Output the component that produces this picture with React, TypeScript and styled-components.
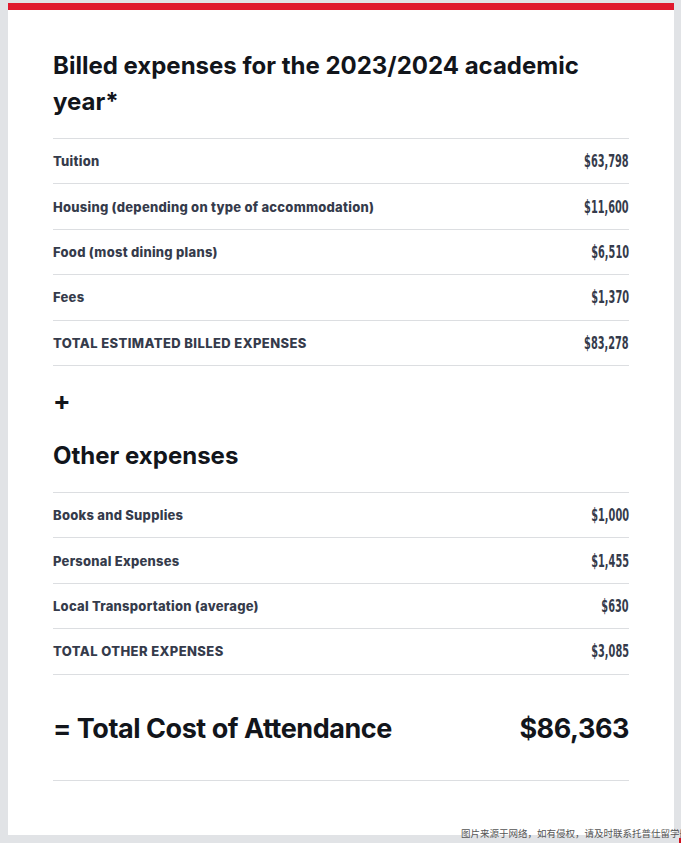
import React from "react";
import styled, { createGlobalStyle } from "styled-components";

const Global = createGlobalStyle`
  html, body { margin: 0; padding: 0; background: #e1e3e6; }
  body { font-family: "Inter", "Noto Sans", sans-serif; }
`;

const Page = styled.div`
  position: relative;
  padding: 3px 7px 8px 8px;
  min-height: 843px;
  box-sizing: border-box;
  overflow: hidden;
`;

const Card = styled.section`
  background: #ffffff;
  border-top: 7px solid #e0192d;
  padding: 38px 45px 54px 45px;
`;

const Heading = styled.h2`
  margin: 0;
  font-family: "Inter", sans-serif;
  font-weight: 700;
  font-size: 24px;
  line-height: 36px;
  color: #12151b;
  letter-spacing: 0;
`;

const Plus = styled.div`
  margin: 17px 0 19px;
  font-family: "Inter", sans-serif;
  font-weight: 700;
  font-size: 26px;
  line-height: 36px;
  color: #12151b;
`;

const Table = styled.div`
  margin-top: 18px;
  border-top: 1px solid #dcdee1;
  display: flex;
  flex-direction: column;
`;

const Row = styled.div`
  display: flex;
  align-items: center;
  justify-content: space-between;
  height: 45.4px;
  box-sizing: border-box;
  border-bottom: 1px solid #dcdee1;
`;

const Label = styled.span<{ $caps?: boolean }>`
  font-family: "Inter", sans-serif;
  font-weight: 800;
  font-size: 13px;
  color: #353b4b;
  letter-spacing: ${(p) => (p.$caps ? "0.4px" : "0.25px")};
`;

const Value = styled.span`
  display: inline-block;
  font-family: "DejaVu Sans Condensed", sans-serif;
  font-weight: 700;
  font-size: 17px;
  color: #353b4b;
  transform: scaleX(0.64);
  transform-origin: right center;
`;

const TotalRow = styled.div`
  display: flex;
  align-items: center;
  justify-content: space-between;
  padding: 34px 0 31px;
  border-bottom: 1px solid #dcdee1;
  font-family: "Inter", sans-serif;
  font-weight: 700;
  font-size: 27px;
  line-height: 40px;
  color: #12151b;
  letter-spacing: -0.45px;
`;

const Watermark = styled.div`
  position: absolute;
  left: 461px;
  top: 826px;
  white-space: nowrap;
  font-family: "Noto Sans CJK SC", sans-serif;
  font-size: 9.5px;
  color: #555555;
`;

const CornerMark = styled.div`
  position: absolute;
  right: 0;
  bottom: 0;
  width: 2px;
  height: 5px;
  background: #d0111f;
`;

type Item = { label: string; value: string; caps?: boolean };

const billed: Item[] = [
  { label: "Tuition", value: "$63,798" },
  { label: "Housing (depending on type of accommodation)", value: "$11,600" },
  { label: "Food (most dining plans)", value: "$6,510" },
  { label: "Fees", value: "$1,370" },
  { label: "TOTAL ESTIMATED BILLED EXPENSES", value: "$83,278", caps: true },
];

const other: Item[] = [
  { label: "Books and Supplies", value: "$1,000" },
  { label: "Personal Expenses", value: "$1,455" },
  { label: "Local Transportation (average)", value: "$630" },
  { label: "TOTAL OTHER EXPENSES", value: "$3,085", caps: true },
];

const ExpenseTable = ({ items }: { items: Item[] }) => (
  <Table>
    {items.map((it) => (
      <Row key={it.label}>
        <Label $caps={it.caps}>{it.label}</Label>
        <Value>{it.value}</Value>
      </Row>
    ))}
  </Table>
);

export default function App() {
  return (
    <Page>
      <Global />
      <Card>
        <Heading>Billed expenses for the 2023/2024 academic year*</Heading>
        <ExpenseTable items={billed} />
        <Plus>+</Plus>
        <Heading>Other expenses</Heading>
        <ExpenseTable items={other} />
        <TotalRow>
          <span>= Total Cost of Attendance</span>
          <span>$86,363</span>
        </TotalRow>
      </Card>
      <Watermark>图片来源于网络，如有侵权，请及时联系托普仕留学删除</Watermark>
      <CornerMark />
    </Page>
  );
}
